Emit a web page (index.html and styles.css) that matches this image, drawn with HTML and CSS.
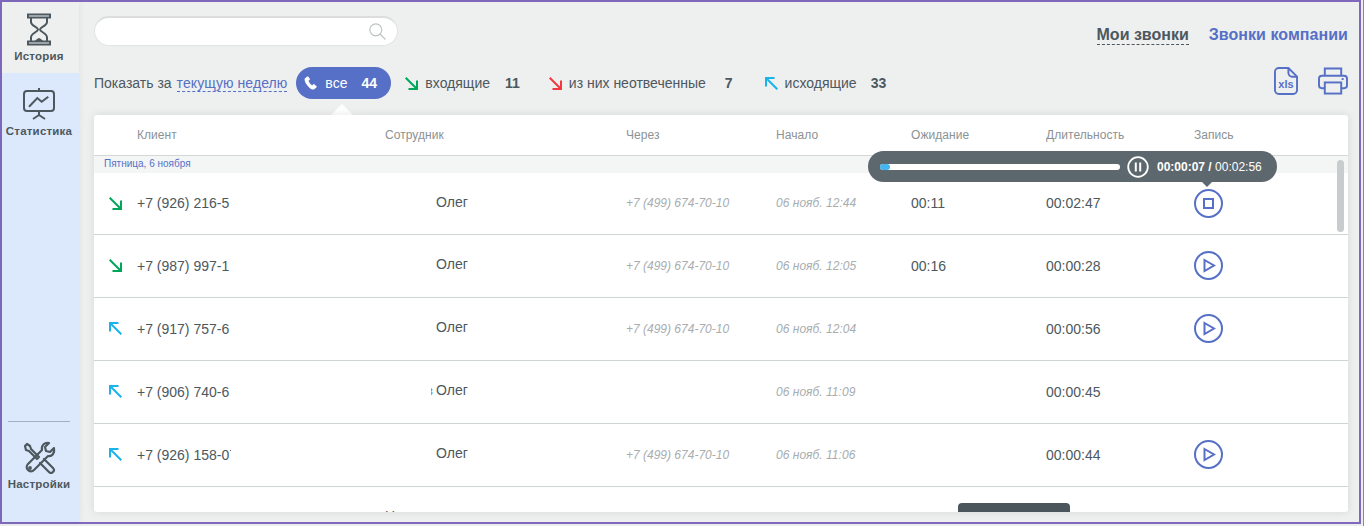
FILE: index.html
```html
<!DOCTYPE html>
<html lang="ru">
<head>
<meta charset="utf-8">
<title>История звонков</title>
<link rel="stylesheet" href="styles.css">
</head>
<body>
<div class="frame">
  <nav class="side">
    <a class="nav-item active">
      <svg class="nav-icon" width="26" height="33" viewBox="0 0 26 33" fill="none" stroke="#4c585e" stroke-width="2"><rect x="2" y="1.500" width="22" height="3"/><rect x="2" y="28.500" width="22" height="3"/><path d="M5 5v4c0 4 7 5 7 7.500 0 2.500-7 3.500-7 8V28M21 5v4c0 4-7 5-7 7.500 0 2.500 7 3.500 7 8V28"/><path d="M9 28c1-1.500 2.500-2.500 4-3 1.500.5 3 1.500 4 3z" fill="#4c585e" stroke="none"/></svg>
      <span>История</span>
    </a>
    <a class="nav-item stats">
      <svg class="nav-icon" width="32" height="32" viewBox="0 0 32 32" fill="none" stroke="#4c585e" stroke-width="2"><rect x="1" y="3" width="30" height="20" rx="3"/><path d="M16 0v3M16 23v4M16 27l-6 4M16 27l6 4"/><path d="M6 18.700 14.300 10l4.400 3.700 6.600-5"/></svg>
      <span>Статистика</span>
    </a>
    <div class="side-rest"></div>
    <a class="nav-item settings">
      <svg class="nav-icon" width="33" height="33" viewBox="0 0 33 33" fill="none" stroke="#4c585e" stroke-width="2.200" stroke-linecap="round" stroke-linejoin="round"><path d="M2 5l2-2 3 2 1 3 8 8-2 2-8-8-3-1z"/><path d="M21 18l9 9a2.500 2.500 0 0 1-4 4l-9-9"/><path d="M31 7l-4 4-4-1-1-4 4-4c-4-1-8 2-7 7L5 23c-4 4 2 10 6 6l14-14c4 1 7-3 6-8z"/><circle cx="7" cy="27" r=".8" fill="#4c585e"/></svg>
      <span>Настройки</span>
    </a>
  </nav>
  <main class="main">
    <header class="top">
      <div class="search">
        <svg width="17" height="17" viewBox="0 0 17 17" fill="none" stroke="#bfc3c5" stroke-width="1.200"><circle cx="6.800" cy="6.800" r="6"/><path d="M11 11l5.500 5.500"/></svg>
      </div>
      <div class="tabs"><a class="tab-mine">Мои звонки</a><a class="tab-company">Звонки компании</a></div>
    </header>
    <section class="filters">
      <span class="show">Показать за</span>
      <a class="period">текущую неделю</a>
      <a class="pill">
        <svg width="14" height="14" viewBox="0 0 14 14" fill="#fff"><path d="M3.200.6 1 2.200C.2 3 .5 5.300 2.400 8.300c2 3 4.500 5.300 6.600 5.300.8 0 2-.6 3.600-2.300.3-.4.200-.8-.1-1.100L10.200 8.300c-.4-.3-.8-.2-1.100.1l-.9 1c-1.700-1-3-2.900-3.700-4.700l1.100-.8c.4-.3.400-.7.200-1.100L4.400.8C4.100.4 3.600.3 3.200.6z"/></svg>
        <span class="pill-label">все</span><b>44</b>
      </a>
      <span class="fil fil-in">
        <svg class="arrow" width="13" height="13" viewBox="0 0 13 13" fill="none" stroke="#00a65a" stroke-width="2"><path d="M.7.7l11 11M12 3.500V12H3.500"/></svg>
        <span>входящие</span><b>11</b>
      </span>
      <span class="fil fil-missed">
        <svg class="arrow" width="13" height="13" viewBox="0 0 13 13" fill="none" stroke="#f2383f" stroke-width="2"><path d="M.7.7l11 11M12 3.500V12H3.500"/></svg>
        <span>из них неотвеченные</span><b>7</b>
      </span>
      <span class="fil fil-out">
        <svg class="arrow" width="13" height="13" viewBox="0 0 13 13" fill="none" stroke="#1ab3ea" stroke-width="2"><path d="M12.300 12.300l-11-11M1 9.500V1h8.500"/></svg>
        <span>исходящие</span><b>33</b>
      </span>
      <div class="tools">
        <svg width="24" height="28" viewBox="0 0 25 29" fill="none" stroke="#5570c6" stroke-width="2"><path d="M15 1H5a4 4 0 0 0-4 4v19a4 4 0 0 0 4 4h15a4 4 0 0 0 4-4V10z"/><path d="M15 1v5a4 4 0 0 0 4 4h5"/><text x="12.500" y="22" class="xls" fill="#5570c6" stroke="none" text-anchor="middle">xls</text></svg>
        <svg width="30" height="28" viewBox="0 0 31 29" fill="none" stroke="#5570c6" stroke-width="2"><path d="M7 9V1.500h17V9"/><path d="M7 22H4a3 3 0 0 1-3-3v-7a3 3 0 0 1 3-3h23a3 3 0 0 1 3 3v7a3 3 0 0 1-3 3h-3"/><rect x="7" y="16" width="17" height="11.500"/><path d="M24.500 12.500h2"/></svg>
      </div>
    </section>
    <section class="card">
      <div class="row head">
        <span class="c-client">Клиент</span><span class="c-staff">Сотрудник</span><span class="c-via">Через</span><span class="c-start">Начало</span><span class="c-wait">Ожидание</span><span class="c-len">Длительность</span><span class="c-rec">Запись</span>
      </div>
      <div class="day">Пятница, 6 ноября</div>
      <div class="row call first">
        <svg class="c-dir" width="13" height="13" viewBox="0 0 13 13" fill="none" stroke="#00a65a" stroke-width="2"><path d="M.7.7l11 11M12 3.500V12H3.500"/></svg>
        <span class="c-client num">+7 (926) 216-5</span><span class="c-staff name">Олег</span><span class="c-via via">+7 (499) 674-70-10</span><span class="c-start date">06 нояб. 12:44</span><span class="c-wait">00:11</span><span class="c-len">00:02:47</span>
        <span class="c-rec"><svg class="rec" width="29" height="29" viewBox="0 0 29 29" fill="none" stroke="#5570c6" stroke-width="2"><circle cx="14.500" cy="14.500" r="13.500"/><rect x="10" y="10" width="9" height="9"/></svg></span>
      </div>
      <div class="row call">
        <svg class="c-dir" width="13" height="13" viewBox="0 0 13 13" fill="none" stroke="#00a65a" stroke-width="2"><path d="M.7.7l11 11M12 3.500V12H3.500"/></svg>
        <span class="c-client num">+7 (987) 997-1</span><span class="c-staff name">Олег</span><span class="c-via via">+7 (499) 674-70-10</span><span class="c-start date">06 нояб. 12:05</span><span class="c-wait">00:16</span><span class="c-len">00:00:28</span>
        <span class="c-rec"><svg class="rec" width="29" height="29" viewBox="0 0 29 29" fill="none" stroke="#5570c6" stroke-width="2"><circle cx="14.500" cy="14.500" r="13.500"/><path d="M10.500 9l9.500 5.500-9.500 5.500z"/></svg></span>
      </div>
      <div class="row call">
        <svg class="c-dir" width="13" height="13" viewBox="0 0 13 13" fill="none" stroke="#1ab3ea" stroke-width="2"><path d="M12.300 12.300l-11-11M1 9.500V1h8.500"/></svg>
        <span class="c-client num">+7 (917) 757-6</span><span class="c-staff name">Олег</span><span class="c-via via">+7 (499) 674-70-10</span><span class="c-start date">06 нояб. 12:04</span><span class="c-wait"></span><span class="c-len">00:00:56</span>
        <span class="c-rec"><svg class="rec" width="29" height="29" viewBox="0 0 29 29" fill="none" stroke="#5570c6" stroke-width="2"><circle cx="14.500" cy="14.500" r="13.500"/><path d="M10.500 9l9.500 5.500-9.500 5.500z"/></svg></span>
      </div>
      <div class="row call">
        <svg class="c-dir" width="13" height="13" viewBox="0 0 13 13" fill="none" stroke="#1ab3ea" stroke-width="2"><path d="M12.300 12.300l-11-11M1 9.500V1h8.500"/></svg>
        <span class="c-client num">+7 (906) 740-6</span><span class="c-staff name"><span class="cut">в</span>Олег</span><span class="c-via via"></span><span class="c-start date">06 нояб. 11:09</span><span class="c-wait"></span><span class="c-len">00:00:45</span>
        <span class="c-rec"></span>
      </div>
      <div class="row call">
        <svg class="c-dir" width="13" height="13" viewBox="0 0 13 13" fill="none" stroke="#1ab3ea" stroke-width="2"><path d="M12.300 12.300l-11-11M1 9.500V1h8.500"/></svg>
        <span class="c-client num">+7 (926) 158-07</span><span class="c-staff name">Олег</span><span class="c-via via">+7 (499) 674-70-10</span><span class="c-start date">06 нояб. 11:06</span><span class="c-wait"></span><span class="c-len">00:00:44</span>
        <span class="c-rec"><svg class="rec" width="29" height="29" viewBox="0 0 29 29" fill="none" stroke="#5570c6" stroke-width="2"><circle cx="14.500" cy="14.500" r="13.500"/><path d="M10.500 9l9.500 5.500-9.500 5.500z"/></svg></span>
      </div>
      <div class="row call">
        <span class="c-client num"></span><span class="c-staff name wide">Никита</span>
      </div>
      <div class="scrollbar"></div>
      <div class="player">
        <div class="track"><div class="track-fill"></div></div>
        <svg width="22" height="22" viewBox="0 0 22 22" fill="none" stroke="#fff"><circle cx="11" cy="11" r="9.800" stroke-width="1.800"/><path d="M8.800 6.500v9M13.200 6.500v9" stroke-width="2"/></svg>
        <span class="time"><b>00:00:07 /</b> 00:02:56</span>
      </div>
      <div class="toast"></div>
    </section>
  </main>
</div>
</body>
</html>
```
FILE: styles.css
```css
* { box-sizing: border-box; }
html, body { margin: 0; height: 100%; overflow: hidden; background: #eceeee; }
body { font-family: "Liberation Sans", Arial, sans-serif; color: #4c585e; border-right: 1px solid #8c8c8c; }
.frame {
  width: 1361px; height: 524px;
  border: 2px solid #8069bd;
  display: flex; background: #eeefef;
}
.side { width: 77px; background: #dce9fc; display: flex; flex-direction: column; flex: none; box-shadow: 1px 0 6px rgba(0,0,0,.06); }
.nav-item { display: flex; flex-direction: column; align-items: center; padding-right: 3px; font-size: 11.500px; font-weight: 700; color: #4c585e; letter-spacing: .2px; white-space: nowrap; }
.active { background: #eeefef; height: 71px; padding-top: 11px; gap: 4px; }
.stats { padding-top: 15px; gap: 5px; }
.side-rest { flex: 1; }
.settings { height: 101px; margin: 0 9px 0 6px; padding-right: 0; border-top: 1px solid #9fb0c6; padding-top: 19px; gap: 4px; }
.main { flex: 1; min-width: 0; padding: 0 11px 10px 15px; display: flex; flex-direction: column; }
.top { display: flex; justify-content: space-between; align-items: center; height: 58px; flex: none; }
.search { width: 304px; height: 30px; background: #fff; border-radius: 15px; border: 1px solid #e2e3e3; border-top: 2px solid #dcdddd; display: flex; justify-content: flex-end; align-items: center; padding-right: 11px; }
.tabs { display: flex; gap: 20px; font-size: 16px; font-weight: 700; margin-top: 8px; }
.tab-mine { color: #4c585e; border-bottom: 1px dashed #4c585e; line-height: 18px; }
.tab-company { color: #5570c6; line-height: 18px; letter-spacing: .05px; }
.filters { height: 55px; flex: none; display: flex; align-items: center; font-size: 14px; padding-bottom: 9px; position: relative; }
.filters::after { content: ""; position: absolute; left: 237px; bottom: 0; border: 11px solid transparent; border-top: 0; border-bottom-color: #fff; }
.show { margin-right: 5px; }
.period { color: #5570c6; border-bottom: 1px dashed #5570c6; line-height: 16px; margin-right: 9px; letter-spacing: .07px; }
.pill { background: #5570c6; color: #fff; border-radius: 16px; height: 32px; width: 95px; display: flex; align-items: center; padding-left: 8px; flex: none; margin-right: 13px; }
.pill-label { margin-left: 7px; }
.pill b { margin-left: 14px; font-size: 14px; }
.fil { display: flex; align-items: center; }
.fil .arrow { margin: 0 7px 0 1px; }
.fil b { font-size: 14px; }
.fil-in { margin-right: 28px; }
.fil-in b { margin-left: 15px; }
.fil-missed { margin-right: 31px; }
.fil-missed b { margin-left: 19px; }
.fil-out b { margin-left: 14px; }
.tools { margin-left: auto; display: flex; gap: 20px; align-items: center; margin-top: -4px; }
.xls { font-size: 11.500px; font-weight: 700; }
.card { position: relative; flex: 1; background: #fff; border-radius: 3px; box-shadow: 0 0 8px rgba(0,0,0,.10); overflow: hidden; }
.row { display: flex; align-items: center; padding-left: 43px; }
.row > span { flex: none; display: block; white-space: nowrap; overflow: hidden; }
.c-client { width: 248px; }
.c-staff { width: 241px; }
.c-via { width: 150px; }
.c-start { width: 135px; }
.c-wait { width: 135px; }
.c-len { width: 148px; }
.c-rec { width: 60px; }
.head { height: 41px; border-bottom: 1px solid #d3d7d8; font-size: 12px; color: #8b9295; letter-spacing: .05px; }
.day { height: 17px; background: #f4f6f6; font-size: 10px; color: #5570c6; padding: 2px 10px; line-height: 12px; }
.call { height: 63px; border-bottom: 1px solid #cfd4d6; font-size: 14px; position: relative; }
.call.first { height: 62px; padding-bottom: 2px; }
.c-dir { position: absolute; left: 15px; top: 24px; }
.num { width: 94px !important; margin-right: 154px; }
.call .name { padding-left: 51px; position: relative; top: -2px; }
.call.first .name { top: -1px; }
.call .name.wide { padding-left: 0; }
.cut { position: absolute; left: 46px; top: 2px; width: 2px; overflow: hidden; text-indent: -4.500px; font-size: 12px; color: #4a8fc0; }
.via, .date { font-style: italic; font-size: 12px; color: #a8adaf; }
.date { letter-spacing: .05px; }
.rec { display: block; margin-top: -1px; }
.first .rec { margin-top: 1px; }
.call > .c-rec { overflow: visible; height: 29px; }
.scrollbar { position: absolute; right: 4px; top: 45px; width: 7px; height: 72px; border-radius: 4px; background: #c9cccc; }
.player { position: absolute; left: 774px; top: 36px; width: 409px; height: 31px; background: #5d686e; border-radius: 16px; display: flex; align-items: center; padding-left: 12px; color: #fff; font-size: 12px; }
.player::after { content: ""; position: absolute; left: 334px; top: 31px; border: 5px solid transparent; border-top-color: #5d686e; border-bottom: 0; }
.track { width: 240px; height: 6px; background: #fff; border-radius: 3px; margin-right: 7px; }
.track-fill { width: 10px; height: 6px; background: #45b6ee; border-radius: 3px; }
.time { margin-left: 8px; white-space: nowrap; }
.toast { position: absolute; left: 864px; bottom: 0; width: 112px; height: 9px; background: #4a565c; border-radius: 4px 4px 0 0; }
```
